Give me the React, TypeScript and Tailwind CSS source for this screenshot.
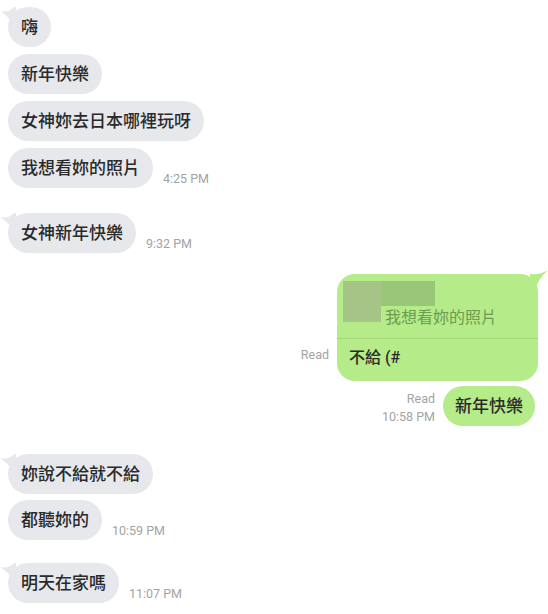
import type { ReactNode } from 'react'

const FONT = { fontFamily: 'Roboto, "Noto Sans CJK TC", "Noto Sans", sans-serif' }

function LeftTail() {
  return (
    <svg className="absolute left-[-8px] top-0" width="16" height="18" viewBox="0 0 16 18">
      <path d="M0 4 Q8 6 14 0 L16 0 L16 16 L12 16 Q8 9 0 4 Z" fill="#e6e8ec" />
    </svg>
  )
}

function RightTail() {
  return (
    <svg className="absolute right-[-10px] top-[-4px]" width="18" height="20" viewBox="0 0 18 20">
      <path d="M18 0 Q10 5 2 4 L0 4 L0 20 L5 20 Q8 9 18 0 Z" fill="#b6eb89" />
    </svg>
  )
}

function Left({ text, tail, time }: { text: string; tail?: boolean; time?: string }) {
  return (
    <div className="flex items-end pl-2">
      <div className="relative rounded-[20px] bg-[#e6e8ec] px-[13px] py-2 text-[17px] font-medium leading-6 text-[#2a2a2a]">
        {tail && <LeftTail />}
        <span className="relative">{text}</span>
      </div>
      {time && <span className="mb-[2px] ml-[10px] text-[12.5px] leading-[14px] text-[#a3a3a3]">{time}</span>}
    </div>
  )
}

function Meta({ children }: { children: ReactNode }) {
  return <div className="mr-2 flex flex-col items-end text-[12.5px] leading-[18px] text-[#a3a3a3]">{children}</div>
}

export default function App() {
  return (
    <div className="flex h-[614px] w-[548px] flex-col overflow-hidden bg-white pt-[7px]" style={FONT}>
      <div className="flex flex-col gap-[7px]">
        <Left text="嗨" tail />
        <Left text="新年快樂" />
        <Left text="女神妳去日本哪裡玩呀" />
        <Left text="我想看妳的照片" time="4:25 PM" />
      </div>

      <div className="mt-[25px]">
        <Left text="女神新年快樂" tail time="9:32 PM" />
      </div>

      {/* 인용 답장 말풍선 */}
      <div className="mt-[21px] flex items-end justify-end pr-[10px]">
        <div className="mb-[17px]">
          <Meta>Read</Meta>
        </div>
        <div className="relative w-[201px] rounded-[18px] bg-[#b6eb89]">
          <RightTail />
          <div className="relative flex px-[6px] pt-[7px] pb-[8px]">
            <div className="h-[41px] w-[38px] bg-[#a6c486]" />
            <div className="flex flex-col">
              <div className="h-[25px] w-[54px] bg-[#99c678]" />
              <span className="pl-1 text-[16px] leading-6 text-[#6c9b52]">我想看妳的照片</span>
            </div>
          </div>
          <div className="h-px bg-[#a3d77b]" />
          <div className="px-3 pt-[8px] pb-[12px] text-[16px] font-medium leading-[22px] text-[#2a2a2a]">不給 (#</div>
        </div>
      </div>

      <div className="mt-[5px] flex items-end justify-end pr-[13px]">
        <Meta>
          <span>Read</span>
          <span>10:58 PM</span>
        </Meta>
        <div className="rounded-[20px] bg-[#b6eb89] px-[12px] py-2 text-[17px] font-medium leading-6 text-[#2a2a2a]">新年快樂</div>
      </div>

      <div className="mt-[28px] flex flex-col gap-[6px]">
        <Left text="妳說不給就不給" tail />
        <Left text="都聽妳的" time="10:59 PM" />
      </div>

      <div className="mt-[23px]">
        <Left text="明天在家嗎" tail time="11:07 PM" />
      </div>
    </div>
  )
}
